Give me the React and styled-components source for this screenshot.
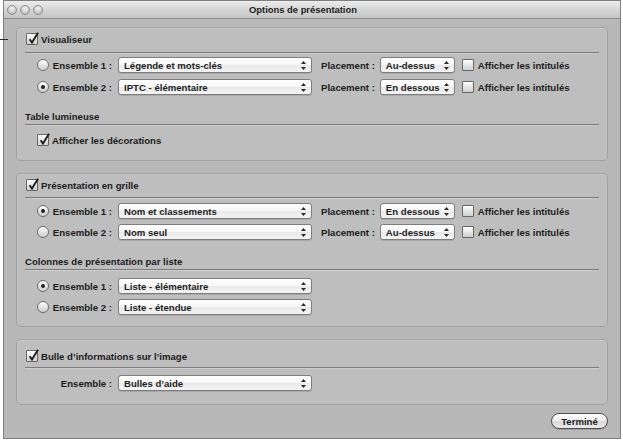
import styled, { createGlobalStyle } from "styled-components";

const GlobalStyle = createGlobalStyle`
  html, body {
    margin: 0;
    padding: 0;
    background: #ffffff;
  }
  body {
    font-family: "Liberation Sans", Arial, sans-serif;
    color: #1c1c1c;
  }
`;

const Page = styled.div`
  position: relative;
  width: 623px;
  height: 440px;
  overflow: hidden;
`;

const EdgeMark = styled.div`
  position: absolute;
  left: 0;
  top: 39px;
  width: 8px;
  height: 1px;
  background: #2a2a2a;
`;

const Window = styled.div`
  box-sizing: border-box;
  width: 618px;
  height: 439px;
  margin-left: 3px;
  border: 1px solid #7f7f7f;
  background: #b8b8b8;
  display: flex;
  flex-direction: column;
`;

const TitleBar = styled.div`
  flex: 0 0 17px;
  display: grid;
  grid-template-columns: 42px 1fr 60px;
  align-items: center;
  background: linear-gradient(#ececec, #d2d2d2 60%, #c6c6c6);
  border-bottom: 1px solid #8c8c8c;
`;

const Lights = styled.div`
  display: flex;
  gap: 3px;
  padding-left: 3px;
`;

const Light = styled.span`
  box-sizing: border-box;
  flex: 0 0 10px;
  width: 10px;
  height: 10px;
  border-radius: 50%;
  border: 1px solid #8e8e8e;
  background: radial-gradient(circle at 50% 30%, #f4f4f4, #c4c4c4 70%, #b0b0b0);
`;

const Title = styled.div`
  text-align: center;
  font-size: 9.4px;
  font-weight: bold;
  color: #222;
`;

const Content = styled.div`
  flex: 1;
  display: flex;
  flex-direction: column;
  padding: 8px 12px 0 12px;
`;

const Panel = styled.section`
  box-sizing: border-box;
  background: #bebebe;
  border: 1px solid #a2a2a2;
  border-radius: 5px;
  box-shadow: inset 0 1px 0 #c8c8c8;
  padding: 0 8px ${(p) => p.$bottom}px 8px;
  margin-top: ${(p) => p.$top}px;
`;

const Header = styled.label`
  display: flex;
  align-items: center;
  height: 14px;
  margin: ${(p) => p.$top || 5}px 0 0 1px;
  font-size: 9.6px;
  font-weight: bold;
`;

const SubHeader = styled.div`
  height: 13px;
  margin-top: ${(p) => p.$top}px;
  font-size: 9.6px;
  font-weight: bold;
  display: flex;
  align-items: center;
`;

const Separator = styled.div`
  height: 1px;
  margin-top: ${(p) => p.$top}px;
  background: #7c7c7c;
  box-shadow: 0 1px 0 #cdcdcd;
`;

const Rows = styled.div`
  display: flex;
  flex-direction: column;
  gap: ${(p) => p.$gap}px;
  margin-top: ${(p) => p.$top}px;
  padding-left: 12px;
`;

const Row = styled.div`
  display: flex;
  align-items: center;
  height: 16px;
  font-size: 9.6px;
  font-weight: bold;
  white-space: nowrap;
`;

const RadioBox = styled.span`
  box-sizing: border-box;
  flex: 0 0 12px;
  width: 12px;
  height: 12px;
  border-radius: 50%;
  border: 1px solid #6c6c6c;
  background: linear-gradient(#ffffff, #e2e2e2 55%, #cfcfcf);
  display: flex;
  align-items: center;
  justify-content: center;
  margin-right: 2px;

  &::after {
    content: "";
    width: 4px;
    height: 4px;
    border-radius: 50%;
    background: #222;
    display: ${(p) => (p.$on ? "block" : "none")};
  }
`;

const Spacer = styled.span`
  flex: 0 0 ${(p) => p.$w}px;
`;

const FieldLabel = styled.span`
  flex: 0 0 61px;
  text-align: right;
  margin-right: 6px;
`;

const Popup = styled.div`
  box-sizing: border-box;
  flex: 0 0 ${(p) => p.$w}px;
  height: 16px;
  border: 1px solid #7d7d7d;
  border-radius: 3px;
  background: linear-gradient(#ffffff, #f6f6f6 50%, #e9e9e9 51%, #f4f4f4);
  box-shadow: 0 1px 0 #a9a9a9;
  display: flex;
  align-items: center;
  justify-content: space-between;
  padding: 0 5px 0 5px;
  font-size: 9.6px;
  font-weight: bold;
  color: #1e1e1e;
`;

const PlacementLabel = styled.span`
  margin-left: 9px;
  margin-right: 5px;
`;

const CheckBoxWrap = styled.span`
  position: relative;
  box-sizing: border-box;
  flex: 0 0 12px;
  width: 12px;
  height: 12px;
  border: 1px solid #666;
  border-radius: 1px;
  background: linear-gradient(#ffffff, #e4e4e4 55%, #d0d0d0);
  margin-left: ${(p) => p.$ml || 0}px;
  margin-right: ${(p) => p.$mr || 4}px;

  svg {
    position: absolute;
    left: 0;
    top: -3px;
  }
`;

const FooterBar = styled.div`
  display: flex;
  justify-content: flex-end;
  margin-top: 8px;
`;

const DoneButton = styled.button`
  box-sizing: border-box;
  width: 57px;
  height: 16px;
  border: 1px solid #4f4f4f;
  border-radius: 8px;
  background: linear-gradient(#ffffff, #ececec 50%, #d8d8d8 51%, #eaeaea);
  box-shadow: 0 1px 0 #9c9c9c;
  font-family: "Liberation Sans", Arial, sans-serif;
  font-size: 9.6px;
  font-weight: bold;
  color: #1e1e1e;
  padding: 0;
`;

const Arrows = () => (
  <svg width="5" height="9" viewBox="0 0 5 9">
    <path d="M2.5 0 L5 3 L0 3 Z" fill="#2a2a2a" />
    <path d="M0 6 L5 6 L2.5 9 Z" fill="#2a2a2a" />
  </svg>
);

const Check = ({ on, ml, mr }) => (
  <CheckBoxWrap $ml={ml} $mr={mr}>
    {on && (
      <svg width="13" height="14" viewBox="0 0 13 14">
        <path
          d="M2.6 8.2 L5 11.6 L11 1.8"
          fill="none"
          stroke="#1e1e1e"
          strokeWidth="1.9"
        />
      </svg>
    )}
  </CheckBoxWrap>
);

const Select = ({ w, value }) => (
  <Popup $w={w}>
    <span>{value}</span>
    <Arrows />
  </Popup>
);

const SetRow = ({ n, on, main, placement }) => (
  <Row>
    <RadioBox $on={on} />
    <FieldLabel>Ensemble {n} :</FieldLabel>
    <Select w={194} value={main} />
    {placement && (
      <>
        <PlacementLabel>Placement :</PlacementLabel>
        <Select w={75} value={placement} />
        <Check ml={7} />
        <span>Afficher les intitulés</span>
      </>
    )}
  </Row>
);

export default function App() {
  return (
    <Page>
      <GlobalStyle />
      <Window>
        <TitleBar>
          <Lights>
            <Light />
            <Light />
            <Light />
          </Lights>
          <Title>Options de présentation</Title>
          <span />
        </TitleBar>
        <Content>
          <Panel $top={0} $bottom={12}>
            <Header $top={4}>
              <Check on mr={3} />
              Visualiseur
            </Header>
            <Separator $top={6} />
            <Rows $top={4} $gap={6}>
              <SetRow n={1} main="Légende et mots-clés" placement="Au-dessus" />
              <SetRow n={2} on main="IPTC - élémentaire" placement="En dessous" />
            </Rows>
            <SubHeader $top={15}>Table lumineuse</SubHeader>
            <Separator $top={1} />
            <Rows $top={7} $gap={0}>
              <Row>
                <Check on mr={3} />
                Afficher les décorations
              </Row>
            </Rows>
          </Panel>

          <Panel $top={12} $bottom={11}>
            <Header $top={4}>
              <Check on mr={3} />
              Présentation en grille
            </Header>
            <Separator $top={5} />
            <Rows $top={5} $gap={5}>
              <SetRow n={1} on main="Nom et classements" placement="En dessous" />
              <SetRow n={2} main="Nom seul" placement="Au-dessus" />
            </Rows>
            <SubHeader $top={15}>Colonnes de présentation par liste</SubHeader>
            <Separator $top={1} />
            <Rows $top={8} $gap={5}>
              <SetRow n={1} on main="Liste - élémentaire" />
              <SetRow n={2} main="Liste - étendue" />
            </Rows>
          </Panel>

          <Panel $top={12} $bottom={13}>
            <Header $top={9}>
              <Check on mr={3} />
              Bulle d’informations sur l’image
            </Header>
            <Separator $top={4} />
            <Rows $top={7} $gap={0}>
              <Row>
                <Spacer $w={14} />
                <FieldLabel>Ensemble :</FieldLabel>
                <Select w={194} value="Bulles d’aide" />
              </Row>
            </Rows>
          </Panel>

          <FooterBar>
            <DoneButton>Terminé</DoneButton>
          </FooterBar>
        </Content>
      </Window>
      <EdgeMark />
    </Page>
  );
}
